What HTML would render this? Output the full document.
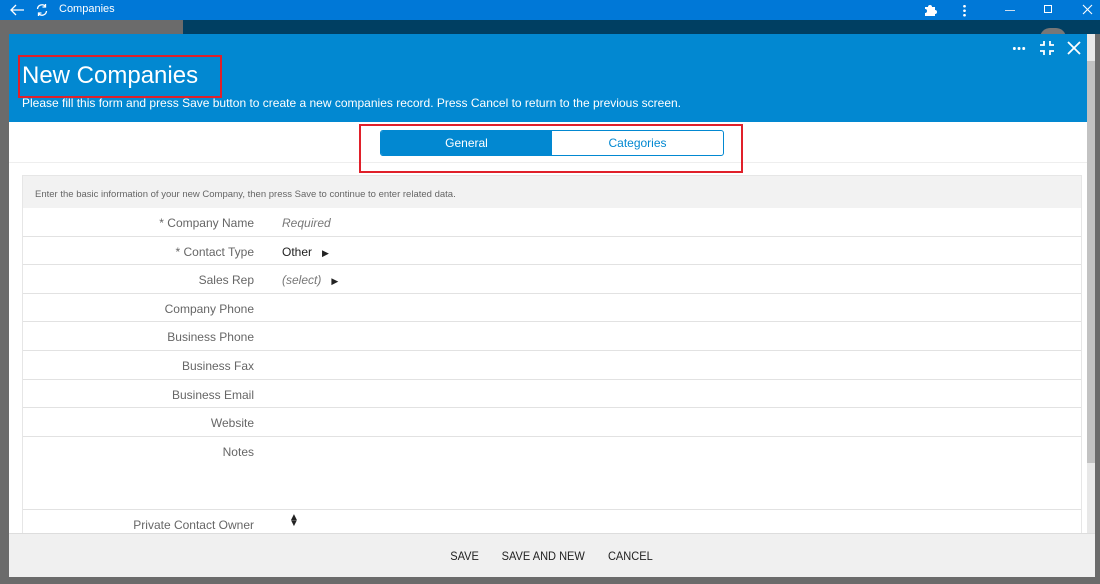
<!DOCTYPE html>
<html><head><style>
*{margin:0;padding:0;box-sizing:border-box}
body{width:1100px;height:584px;overflow:hidden;background:#6b6b6b;font-family:"Segoe UI","Liberation Sans",sans-serif;position:relative}
.top{position:absolute;left:0;top:0;width:1100px;height:20px;background:#0078d7;color:#fff;font-size:11px}
.bg2{position:absolute;left:183px;top:20px;width:917px;height:14px;background:#003f62}
.dlg{position:absolute;left:9px;top:34px;width:1086px;height:543px;background:#fff;overflow:hidden}
.hdr{position:absolute;left:0;top:0;width:1086px;height:88px;background:#0288d1;color:#fff}
.sb{position:absolute;left:1078px;top:27px;width:8px;height:402px;background:#c2c2c2}
.sbt{position:absolute;left:1078px;top:0;width:8px;height:543px;background:#e8e8e8}
.tabs{position:absolute;left:371px;top:96px;width:344px;height:26px;border:1px solid #0288d1;border-radius:3px;display:flex;font-size:12px;overflow:hidden}
.tabs div{flex:1;text-align:center;line-height:24px}
.panel{position:absolute;left:13px;top:141px;width:1060px;height:370px;border:1px solid #e6e6e6;background:#fff}
.ph{height:32px;background:#f2f2f2;font-size:9.5px;color:#666;padding:13px 0 0 12px}
.row{position:relative;height:28.6px;border-bottom:1px solid #e2e2e2;font-size:12px}
.row .l{position:absolute;right:827px;top:8px;color:#666;white-space:nowrap}
.row .v{position:absolute;left:259px;top:8px;color:#222}
.foot{position:absolute;left:0;top:499px;width:1086px;height:44px;background:#f0f0f0;border-top:1px solid #ddd;text-align:center;font-size:12px;color:#222;padding-top:15px}
.foot span{margin:0 9px;display:inline-block;transform:scaleX(.92)}
.red{position:absolute;border:2px solid #e0202a}
</style></head><body>
<div class="top">
<svg style="position:absolute;left:9px;top:3px" width="16" height="14"><path d="M15 7H2M7 2L2 7l5 5" stroke="#fff" fill="none" stroke-width="1.3"/></svg>
<svg style="position:absolute;left:35px;top:3px" width="14" height="14"><path d="M2.5 6a4.5 4.5 0 0 1 8-2.5M11.5 8a4.5 4.5 0 0 1-8 2.5M10.5 1v3h-3M3.5 13v-3h3" stroke="#fff" fill="none" stroke-width="1.3"/></svg>
<span style="position:absolute;left:59px;top:3px">Companies</span>
<svg style="position:absolute;left:923px;top:3px" width="14" height="14"><path d="M2 4h3a2 2 0 1 1 4 0h3v3a2 2 0 1 1 0 4v2H2v-3a2 2 0 1 0 0-4z" fill="#fff"/></svg>
<div style="position:absolute;left:963px;top:4px;width:3px;height:13px;background:radial-gradient(circle,#fff 1.2px,transparent 1.5px) 0 0/3px 4.5px"></div>
<div style="position:absolute;left:1005px;top:10px;width:10px;height:1px;background:#cde"></div>
<div style="position:absolute;left:1044px;top:5px;width:8px;height:8px;border:1px solid #fff"></div>
<svg style="position:absolute;left:1082px;top:4px" width="11" height="11"><path d="M1 1l9 9M10 1l-9 9" stroke="#fff" stroke-width="1.1"/></svg>
</div>
<div class="bg2"></div>
<div style="position:absolute;left:1040px;top:28px;width:26px;height:10px;border-radius:13px 13px 0 0;background:#777"></div>
<div class="dlg">
<div class="hdr">
<div style="position:absolute;left:13px;top:28px;font-size:24px">New Companies</div>
<div style="position:absolute;left:13px;top:62px;font-size:12px">Please fill this form and press Save button to create a new companies record. Press Cancel to return to the previous screen.</div>
<div style="position:absolute;left:1003px;top:13px;width:14px;height:3px;background:radial-gradient(circle,#fff 1.4px,transparent 1.6px) 0 0/4.7px 3px"></div>
<svg style="position:absolute;left:1030px;top:6px" width="16" height="16"><path d="M5 1v4H1M11 1v4h4M5 15v-4H1M11 15v-4h4" stroke="#fff" fill="none" stroke-width="1.8"/></svg>
<svg style="position:absolute;left:1058px;top:7px" width="14" height="14"><path d="M1 1l12 12M13 1L1 13" stroke="#fff" stroke-width="1.8"/></svg>
</div>
<div class="sbt"></div><div class="sb"></div>
<div style="position:absolute;left:0;top:128px;width:1078px;height:1px;background:#eee"></div>
<div class="tabs"><div style="background:#0288d1;color:#fff">General</div><div style="color:#0288d1">Categories</div></div>
<div class="panel">
<div class="ph">Enter the basic information of your new Company, then press Save to continue to enter related data.</div>
<div class="row"><span class="l">* Company Name</span><span class="v" style="color:#777;font-style:italic">Required</span></div>
<div class="row"><span class="l">* Contact Type</span><span class="v">Other &nbsp;&nbsp;<span style="font-size:9px">▶</span></span></div>
<div class="row"><span class="l">Sales Rep</span><span class="v" style="color:#777;font-style:italic">(select) &nbsp;&nbsp;<span style="font-size:9px;font-style:normal;color:#222">▶</span></span></div>
<div class="row"><span class="l">Company Phone</span></div>
<div class="row"><span class="l">Business Phone</span></div>
<div class="row"><span class="l">Business Fax</span></div>
<div class="row"><span class="l">Business Email</span></div>
<div class="row"><span class="l">Website</span></div>
<div class="row" style="height:73px"><span class="l">Notes</span></div>
<div class="row" style="border:0"><span class="l">Private Contact Owner</span><span class="v" style="left:266px;top:5px;font-size:10px;line-height:6px">▲<br>▼</span></div>
</div>
<div class="foot"><span>SAVE</span><span>SAVE AND NEW</span><span>CANCEL</span></div>
</div>
<div class="red" style="left:18px;top:55px;width:204px;height:43px"></div>
<div class="red" style="left:359px;top:124px;width:384px;height:49px"></div>
</body></html>
